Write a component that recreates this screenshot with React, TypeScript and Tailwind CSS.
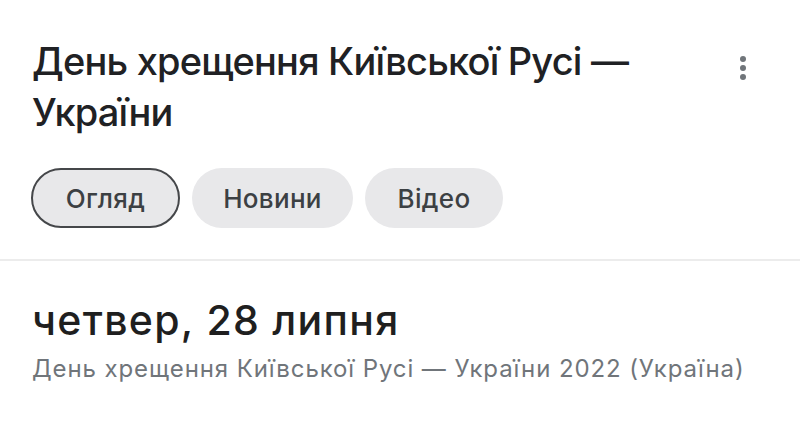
export default function App() {
  const chips = ["Огляд", "Новини", "Відео"];
  return (
    <div className="w-[800px] h-[426px] bg-white overflow-hidden font-[Inter,'Liberation_Sans',sans-serif]">
      <div className="flex items-start justify-between pl-[32px] pr-[52px] pt-[36px]">
        <h1 className="text-[38px] leading-[51px] font-medium text-[#202124] tracking-[-0.8px]">
          День хрещення Київської Русі —<br />України
        </h1>
        <svg width="10" height="26" viewBox="0 0 10 26" className="mt-[19px]">
          <circle cx="5" cy="4" r="3" fill="#70757a" />
          <circle cx="5" cy="13" r="3" fill="#70757a" />
          <circle cx="5" cy="22" r="3" fill="#70757a" />
        </svg>
      </div>
      <div className="flex gap-[12px] pl-[31px] mt-[30px]">
        {chips.map((c, i) => (
          <div
            key={c}
            className={
              "h-[60px] rounded-full flex items-center justify-center bg-[#e8e8ea] text-[26px] tracking-[0.3px] font-medium text-[#3c4043] " +
              (i === 0 ? "w-[149px] border-2 border-[#45474a]" : i === 1 ? "w-[161px]" : "w-[138px]")
            }
          >
            {c}
          </div>
        ))}
      </div>
      <div className="mt-[31px] h-[2px] bg-[#ececec]" />
      <div className="pl-[32px] pt-[37px]">
        <div className="text-[41px] leading-[44px] font-medium tracking-[1.3px] text-[#1f1f1f]">
          четвер, 28 липня
        </div>
        <div className="mt-[12px] text-[24px] leading-[30px] tracking-[0.9px] text-[#70757a]">
          День хрещення Київської Русі — України 2022 (Україна)
        </div>
      </div>
    </div>
  );
}
